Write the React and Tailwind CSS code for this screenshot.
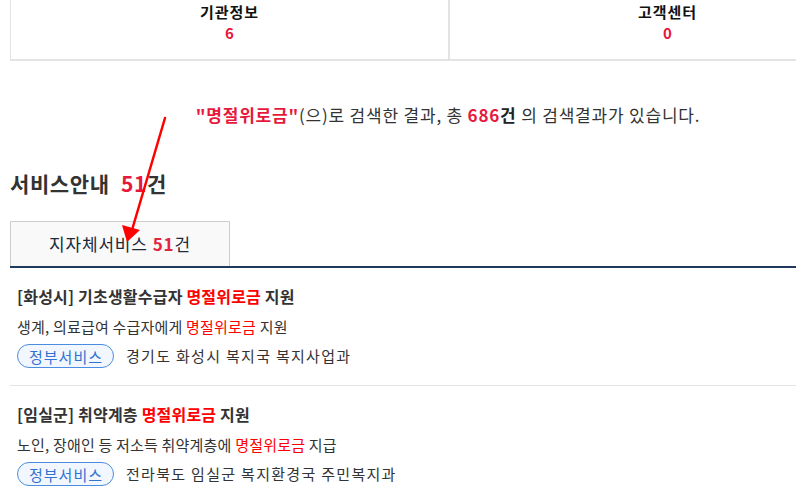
import React from "react";

const FONT = { fontFamily: '"Noto Sans CJK KR", "Noto Sans", sans-serif' };

const services = [
  {
    region: "화성시",
    before: "기초생활수급자 ",
    after: " 지원",
    descBefore: "생계, 의료급여 수급자에게 ",
    descAfter: " 지원",
    dept: "경기도 화성시 복지국 복지사업과",
  },
  {
    region: "임실군",
    before: "취약계층 ",
    after: " 지원",
    descBefore: "노인, 장애인 등 저소득 취약계층에 ",
    descAfter: " 지급",
    dept: "전라북도 임실군 복지환경국 주민복지과",
  },
];

function Hl({ children }) {
  return <span className="text-[#ff0000]">{children}</span>;
}

function ServiceItem({ item }) {
  return (
    <li className="border-b border-[#e5e5e5] pl-[7px] pt-[17px] pb-[17px]">
      <p className="text-[16px] leading-[22px] font-semibold tracking-[0.2px] text-[#333]">
        [{item.region}] {item.before}
        <Hl>명절위로금</Hl>
        {item.after}
      </p>
      <p className="mt-[9px] text-[15px] leading-[22px] tracking-[0.2px] text-[#333]">
        {item.descBefore}
        <Hl>명절위로금</Hl>
        {item.descAfter}
      </p>
      <div className="mt-[6px] flex items-center gap-[12px]">
        <span className="inline-flex h-[24px] items-center rounded-full border border-[#4a8de0] bg-[#f2f7ff] pl-[11px] pr-[10px] text-[15px] leading-none tracking-[1px] text-[#2f72cf]">
          정부서비스
        </span>
        <span className="text-[15px] leading-[22px] tracking-[1.3px] text-[#333]">{item.dept}</span>
      </div>
    </li>
  );
}

export default function App() {
  return (
    <div className="relative h-[502px] w-[796px] overflow-hidden bg-white" style={FONT}>
      <div className="ml-[10px] w-[876px]">
        {/* category counts */}
        <div className="grid grid-cols-2 border-x border-b-2 border-[#e3e3e3]">
          <div className="flex h-[59px] flex-col items-center pt-[1px]">
            <span className="text-[15px] leading-[22px] font-semibold tracking-[1px] text-[#111]">기관정보</span>
            <span className="text-[15px] leading-[20px] font-bold text-[#e8173c]">6</span>
          </div>
          <div className="flex h-[59px] flex-col items-center border-l-2 border-[#e3e3e3] pt-[1px]">
            <span className="text-[15px] leading-[22px] font-semibold tracking-[1px] text-[#111]">고객센터</span>
            <span className="text-[15px] leading-[20px] font-bold text-[#e8173c]">0</span>
          </div>
        </div>

        {/* search summary */}
        <p className="mt-[42px] text-center text-[17px] leading-[24px] tracking-[0.8px] text-[#333]">
          <span className="font-bold text-[#e6193c]">"명절위로금"</span>
          (으)로 검색한 결과, 총 <span className="font-bold text-[#e6193c]">686</span>
          <span className="font-bold text-[#222]">건</span> 의 검색결과가 있습니다.
        </p>

        {/* section heading */}
        <h2 className="mt-[42px] text-[21px] leading-[28px] font-bold tracking-[0.6px] text-[#333]">
          서비스안내 <span className="ml-[6px] text-[#e6193c]">51</span>건
        </h2>

        {/* tabs */}
        <div className="mt-[24px] flex border-b-[2px] border-[#1f3a5c]">
          <div className="flex h-[45px] w-[220px] items-center justify-center border border-b-0 border-[#cccccc] bg-[#f9f9f9] text-[17px] tracking-[0.8px] text-[#1e2a3a]">
            지자체서비스 <span className="ml-[5px] font-bold text-[#e2243f]">51</span>건
          </div>
        </div>

        <ul>
          {services.map((s) => (
            <ServiceItem key={s.region} item={s} />
          ))}
        </ul>
      </div>

      {/* red pointer arrow */}
      <svg
        className="pointer-events-none absolute left-0 top-0"
        width="796"
        height="502"
        viewBox="0 0 796 502"
      >
        <line x1="165" y1="118" x2="132" y2="230" stroke="#ff0000" strokeWidth="2.5" strokeLinecap="round" />
        <polygon points="127,242 122,225 140,230" fill="#ff0000" />
      </svg>
    </div>
  );
}
